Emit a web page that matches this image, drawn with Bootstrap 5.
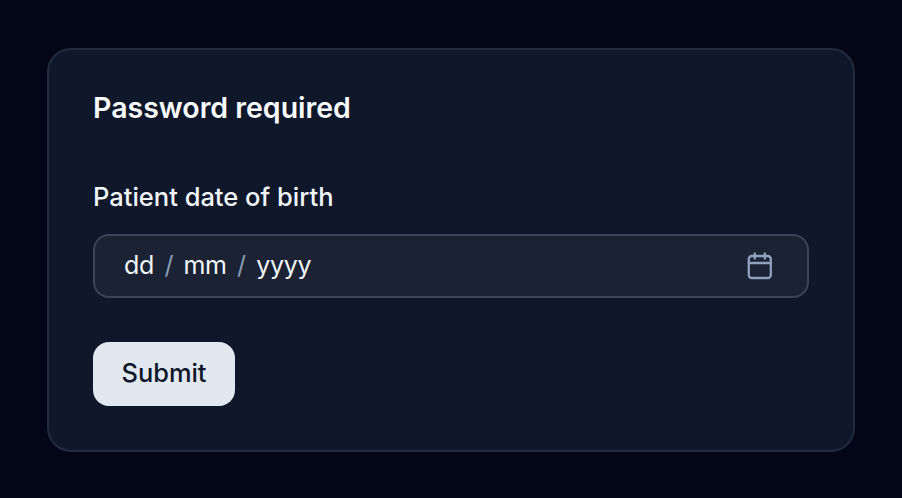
<!DOCTYPE html>
<html lang="en">
<head>
<meta charset="utf-8">
<title>Password required</title>
<link href="https://cdn.jsdelivr.net/npm/bootstrap@5.3.0/dist/css/bootstrap.min.css" rel="stylesheet">
<style>
html, body { height: 100%; }
body { margin: 0; background: #020617; font-family: Inter, "Liberation Sans", sans-serif; padding: 48px 47px 46px; overflow: hidden; }
.pw-card { width: 808px; height: 404px; background: #0f172a; border: 2px solid #222c3f; border-radius: 24px; padding: 42px 44px; color: #f8fafc; }
.pw-title { font-size: 28.5px; line-height: 32px; font-weight: 600; margin: 0 0 57px; }
.pw-label { display: block; font-size: 25.5px; line-height: 32px; font-weight: 500; color: #f1f5f9; margin-bottom: 21px; }
.pw-input { height: 64px; background: #1a2233; border: 2px solid #3a4558; border-radius: 16px; padding: 0 34.5px 0 29px; font-size: 25px; color: #f1f5f9; margin-bottom: 44px; }
.pw-date { padding-bottom: 1px; letter-spacing: -0.3px; }
.pw-sep { color: #8a9bb6; margin: 0 10.4px; }
.pw-btn { width: 142px; height: 64px; background: #e2e8f0; color: #0f172a; border: 0; border-radius: 16px; font-size: 25.4px; font-weight: 500; padding: 0 0 1px; }
.pw-btn:hover { background: #e2e8f0; color: #0f172a; }
.pw-ico { width: 26px; height: 28px; flex: none; }
</style>
</head>
<body>
<main class="pw-card">
  <h1 class="pw-title">Password required</h1>
  <form>
    <label class="pw-label">Patient date of birth</label>
    <div class="pw-input d-flex align-items-center justify-content-between">
      <span class="pw-date">dd<span class="pw-sep">/</span>mm<span class="pw-sep">/</span>yyyy</span>
      <svg class="pw-ico" viewBox="0 0 26 28" fill="none" stroke="#8fa1bd" stroke-width="2.3" stroke-linecap="round" stroke-linejoin="round" aria-hidden="true">
        <rect x="1.8" y="4" width="22" height="22" rx="3"/>
        <path d="M1.8 11h22M7.8 1.5v5M17.8 1.5v5"/>
      </svg>
    </div>
    <button type="button" class="btn pw-btn">Submit</button>
  </form>
</main>
<script src="https://cdn.jsdelivr.net/npm/bootstrap@5.3.0/dist/js/bootstrap.bundle.min.js"></script>
</body>
</html>
